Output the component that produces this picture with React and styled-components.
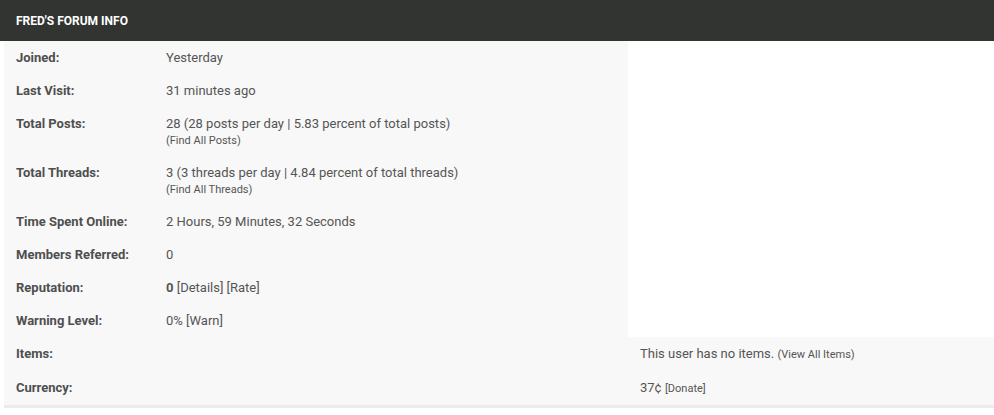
import React from "react";
import styled, { createGlobalStyle } from "styled-components";

const Global = createGlobalStyle`
  html, body { margin: 0; padding: 0; background: #fff; }
  body { font-family: Roboto, "Liberation Sans", Arial, sans-serif; }
`;

const Panel = styled.section`
  width: 994px;
`;

const Header = styled.div`
  background: #323431;
  color: #fff;
  height: 41px;
  display: flex;
  align-items: center;
  padding-left: 16px;
  font-size: 12px;
  font-weight: 700;
  text-transform: uppercase;
  box-sizing: border-box;
`;

const Body = styled.div`
  margin-left: 4px;
  display: grid;
  grid-template-columns: 150px 474px 1fr;
  border-bottom: 3px solid #ebebeb;
`;

const Cell = styled.div`
  background: ${(p) => (p.$blank ? "#fff" : "#f8f8f8")};
  padding: 9px 12px;
  font-size: 13px;
  line-height: 15px;
  color: #555;
  font-weight: ${(p) => (p.$label ? 700 : 400)};
  ${(p) => p.$label && "color: #4f4f4f;"}
`;

const Small = styled.span`
  font-size: 11px;
  color: #555;
`;

const SubLine = styled.div`
  margin-top: 3px;
  font-size: 11px;
  line-height: 13px;
  color: #555;
`;

const Strong = styled.strong`
  font-weight: 700;
`;

const rows = [
  ["Joined:", "Yesterday"],
  ["Last Visit:", "31 minutes ago"],
  [
    "Total Posts:",
    <>
      28 (28 posts per day | 5.83 percent of total posts)
      <SubLine>(Find All Posts)</SubLine>
    </>,
  ],
  [
    "Total Threads:",
    <>
      3 (3 threads per day | 4.84 percent of total threads)
      <SubLine>(Find All Threads)</SubLine>
    </>,
  ],
  ["Time Spent Online:", "2 Hours, 59 Minutes, 32 Seconds"],
  ["Members Referred:", "0"],
  [
    "Reputation:",
    <>
      <Strong>0</Strong> [Details] [Rate]
    </>,
  ],
  ["Warning Level:", "0% [Warn]"],
];

const extra = [
  [
    "Items:",
    <>
      This user has no items. <Small>(View All Items)</Small>
    </>,
  ],
  [
    "Currency:",
    <>
      37¢ <Small>[Donate]</Small>
    </>,
  ],
];

export default function App() {
  return (
    <>
      <Global />
      <Panel>
        <Header>Fred's Forum Info</Header>
        <Body>
          {rows.map(([label, value]) => (
            <React.Fragment key={label}>
              <Cell $label>{label}</Cell>
              <Cell>{value}</Cell>
              <Cell $blank />
            </React.Fragment>
          ))}
          {extra.map(([label, value]) => (
            <React.Fragment key={label}>
              <Cell $label>{label}</Cell>
              <Cell />
              <Cell>{value}</Cell>
            </React.Fragment>
          ))}
        </Body>
      </Panel>
    </>
  );
}
